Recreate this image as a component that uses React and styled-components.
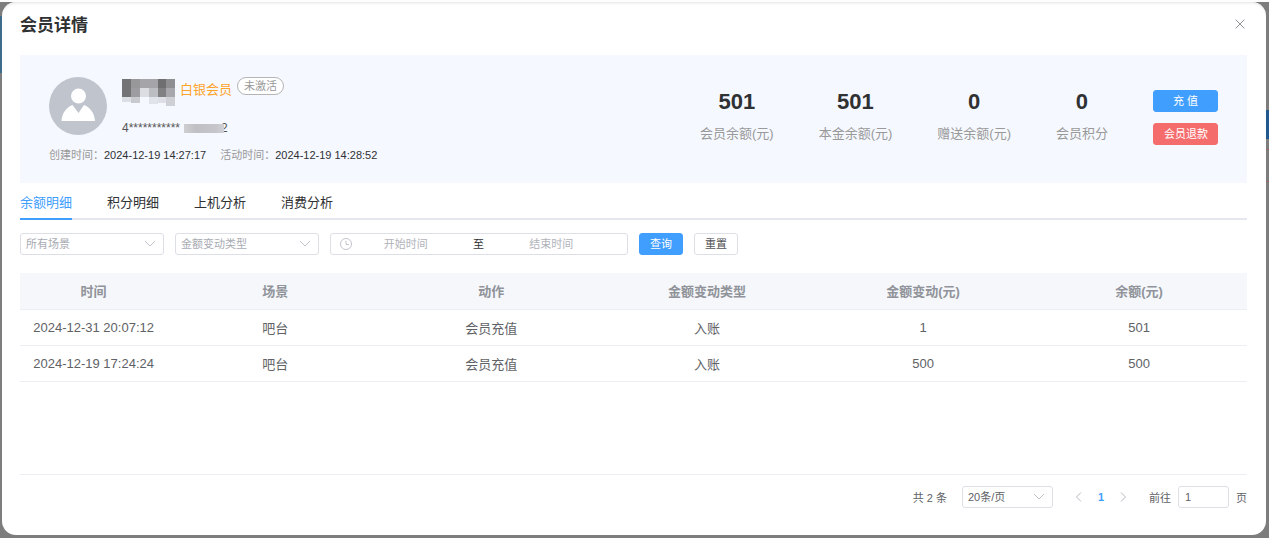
import React, { useState } from 'react'
import styled, { createGlobalStyle } from 'styled-components'

const GlobalStyle = createGlobalStyle`
  * {
    box-sizing: border-box;
  }

  body {
    margin: 0;
    font-family: "Liberation Sans", "Noto Sans CJK SC", sans-serif;
    font-size: 13px;
    color: #303133;
  }

  button,
  input,
  select {
    margin: 0;
    font-family: inherit;
  }
`

const stats = [
  { label: '会员余额(元)', value: 501 },
  { label: '本金余额(元)', value: 501 },
  { label: '赠送余额(元)', value: 0 },
  { label: '会员积分', value: 0 },
]

const tabs = ['余额明细', '积分明细', '上机分析', '消费分析']

const columns = ['时间', '场景', '动作', '金额变动类型', '金额变动(元)', '余额(元)']

const records = [
  ['2024-12-31 20:07:12', '吧台', '会员充值', '入账', '1', '501'],
  ['2024-12-19 17:24:24', '吧台', '会员充值', '入账', '500', '500'],
]

// x, y, shade and height of each blurred block over the member name
const nameBlocks = [
  [0, 0, '#737376'], [9, 0, '#98989b'], [18, 0, '#a5a5a9'], [27, 0, '#a5a5a9'], [36, 0, '#6f6f72'], [44, 0, '#8f8f92'],
  [0, 9, '#737376'], [9, 9, '#9d9da1'], [18, 9, '#dcdde2'], [27, 9, '#bcbdc2'], [36, 9, '#808083'], [44, 9, '#a8a8ac'],
  [0, 18, '#dcdee5', 5], [9, 18, '#c9cad0', 6], [27, 18, '#e1e3ea', 7], [36, 18, '#dddfe6', 6], [44, 18, '#cfd0d6'],
]

const Chevron = ({ d = 'M1 3l5 5 5-5' }) => (
  <svg width="12" height="12" viewBox="0 0 12 12" fill="none" stroke="currentColor" aria-hidden="true">
    <path d={d} />
  </svg>
)

const Avatar = () => (
  <svg width="58" height="58" viewBox="0 0 58 58" aria-hidden="true">
    <circle cx="29" cy="29" r="29" fill="#c0c4cc" />
    <circle cx="29.500" cy="19" r="7.500" fill="#fff" />
    <path d="M12.500 44c.3-7.500 4.500-13.500 11-16l6 8 5.500-8c6.500 2.500 10.700 8.500 11 16z" fill="#fff" />
  </svg>
)

const NameMask = () => (
  <svg width="53" height="27" viewBox="0 0 53 27" aria-hidden="true" shapeRendering="crispEdges">
    {nameBlocks.map(([x, y, fill, height = 9]) => (
      <rect key={`${x}-${y}`} x={x} y={y} width="9" height={height} fill={fill} />
    ))}
  </svg>
)

const Clock = () => (
  <svg width="12" height="12" viewBox="0 0 12 12" fill="none" stroke="currentColor" aria-hidden="true">
    <circle cx="6" cy="6" r="5.500" />
    <path d="M6 2.800V6.500h3" />
  </svg>
)

const App = () => {
  const [active, setActive] = useState(0)

  return (
    <Overlay>
      <GlobalStyle />
      <Dialog role="dialog" aria-labelledby="dialog-title">
        <Header>
          <Title id="dialog-title">会员详情</Title>
          <CloseButton type="button" aria-label="关闭">
            <svg width="10" height="10" viewBox="0 0 10 10" fill="none" stroke="currentColor">
              <path d="M.5.5l9 9M9.500.5l-9 9" />
            </svg>
          </CloseButton>
        </Header>

        <MemberCard>
          <Member>
            <Profile>
              <Avatar />
              <div>
                <NameRow>
                  <NameMask />
                  <Level>白银会员</Level>
                  <Status>未激活</Status>
                </NameRow>
                <IdRow>
                  4***********<IdMask />2
                </IdRow>
              </div>
            </Profile>
            <Times>
              <span>创建时间：<b>2024-12-19 14:27:17</b></span>
              <span>活动时间：<b>2024-12-19 14:28:52</b></span>
            </Times>
          </Member>
          <Summary>
            {stats.map((s) => (
              <Stat key={s.label}>
                <dd>{s.value}</dd>
                <dt>{s.label}</dt>
              </Stat>
            ))}
            <Actions>
              <Button type="button" $color="#409eff">充 值</Button>
              <Button type="button" $color="#f56c6c">会员退款</Button>
            </Actions>
          </Summary>
        </MemberCard>

        <Tabs role="tablist">
          {tabs.map((tab, i) => (
            <Tab key={tab} type="button" role="tab" aria-selected={active === i} $active={active === i} onClick={() => setActive(i)}>
              {tab}
            </Tab>
          ))}
        </Tabs>

        <Filters>
          <SelectBox $width="144px">
            <Select aria-label="所有场景"><option>所有场景</option></Select>
            <Chevron />
          </SelectBox>
          <SelectBox $width="144px">
            <Select aria-label="金额变动类型"><option>金额变动类型</option></Select>
            <Chevron />
          </SelectBox>
          <DateRange>
            <Clock />
            <DateInput placeholder="开始时间" aria-label="开始时间" />
            <Separator>至</Separator>
            <DateInput placeholder="结束时间" aria-label="结束时间" />
          </DateRange>
          <Button type="button" $color="#409eff">查询</Button>
          <Button type="button">重置</Button>
        </Filters>

        <TableArea>
          <Table>
            <thead>
              <tr>{columns.map((c) => <th key={c} scope="col">{c}</th>)}</tr>
            </thead>
            <tbody>
              {records.map((row) => (
                <tr key={row[0]}>
                  {row.map((cell, i) => <td key={columns[i]}>{cell}</td>)}
                </tr>
              ))}
            </tbody>
          </Table>
        </TableArea>

        <Pagination>
          <Total>共 2 条</Total>
          <SelectBox $width="91px" $dark>
            <Select aria-label="每页条数"><option>20条/页</option></Select>
            <Chevron />
          </SelectBox>
          <Pager>
            <PageButton type="button" aria-label="上一页" disabled><Chevron d="M8 1.500L3.500 6 8 10.500" /></PageButton>
            <PageButton type="button" $current>1</PageButton>
            <PageButton type="button" aria-label="下一页" disabled><Chevron d="M4 1.500L8.500 6 4 10.500" /></PageButton>
          </Pager>
          <Jumper>
            前往
            <JumpInput defaultValue="1" />
            页
          </Jumper>
        </Pagination>
      </Dialog>
    </Overlay>
  )
}

export default App

const Overlay = styled.div`
  display: flex;
  min-height: 100vh;
  padding: 0 3px 3px 2px;
  border-top: 2px solid #fdfdfd;
  background:
    linear-gradient(#3f6c8d, #3f6c8d) 0 14px / 2px 57px no-repeat,
    linear-gradient(#205890, #205890) right 108px / 3px 29px no-repeat,
    linear-gradient(#9a6262, #9a6262) right 147px / 3px 1px no-repeat,
    linear-gradient(#9a6262, #9a6262) right 179px / 3px 1px no-repeat,
    #7d7d7d;
`

const Dialog = styled.main`
  display: flex;
  flex-direction: column;
  flex: 1;
  min-width: 0;
  padding: 0 19px 0 18px;
  border-radius: 14px;
  background: #fff;
  box-shadow: inset 0 3px 3px -2px #e4e4e4;
`

const Header = styled.header`
  display: flex;
  justify-content: space-between;
  align-items: center;
  height: 53px;
  padding-bottom: 9px;
`

const Title = styled.h1`
  margin: 0;
  padding-top: 3px;
  font-size: 17px;
  line-height: 24px;
`

const CloseButton = styled.button`
  display: flex;
  padding: 2px;
  border: 0;
  background: none;
  color: #909399;
`

const MemberCard = styled.section`
  display: flex;
  justify-content: space-between;
  align-items: flex-start;
  min-height: 128px;
  padding: 22px 29px 16px;
  background: #f5f8ff;
`

const Member = styled.div`
  display: flex;
  flex-direction: column;
  gap: 9px;
`

const Profile = styled.div`
  display: flex;
  gap: 15px;
`

const NameRow = styled.div`
  display: flex;
  align-items: flex-start;
  height: 42px;

  svg {
    margin-top: 2px;
  }
`

const Level = styled.span`
  margin: 3px 5px 0;
  line-height: 20px;
  color: #fea32b;
`

const Status = styled.span`
  padding: 0 6px;
  border: 1px solid #b4b4b4;
  border-radius: 9px;
  background: #fff;
  font-size: 11px;
  line-height: 16px;
  color: #999;
`

const IdRow = styled.div`
  display: flex;
  align-items: center;
  font-size: 12px;
  line-height: 18px;
  color: #555;
`

const IdMask = styled.span`
  z-index: 1;
  width: 40px;
  height: 9px;
  margin: 0 -3px 0 4px;
  background: linear-gradient(90deg, #cfcfd2, #c0c0c4 30%, #c6c6ca 80%, #cfd0d6);
`

const Times = styled.div`
  display: flex;
  gap: 14px;
  font-size: 11px;
  line-height: 18px;
  color: #999;

  b {
    font-weight: 400;
    color: #303133;
  }
`

const Summary = styled.dl`
  display: flex;
  align-items: flex-start;
  gap: 45px;
  margin: 10px 0 0;
`

const Stat = styled.div`
  text-align: center;

  dd {
    margin: 0;
    font-size: 22px;
    font-weight: 700;
    line-height: 30px;
  }

  dt {
    line-height: 33px;
    color: #999;
  }
`

const Actions = styled.div`
  display: flex;
  flex-direction: column;
  gap: 11px;
  width: 65px;
  padding-top: 3px;
`

const Button = styled.button`
  height: 22px;
  padding: 0 10px;
  border: 1px solid ${({ $color }) => $color || '#dcdfe6'};
  border-radius: 3px;
  background: ${({ $color }) => $color || '#fff'};
  color: ${({ $color }) => ($color ? '#fff' : '#505256')};
  font-size: 11px;
  line-height: 20px;
  white-space: nowrap;
`

const Tabs = styled.div`
  display: flex;
  gap: 35px;
  height: 37px;
  box-shadow: inset 0 -2px #e4e7ed;
`

const Tab = styled.button`
  padding: 1px 0 0;
  border: 0;
  border-bottom: 2px solid ${({ $active }) => ($active ? '#409eff' : 'transparent')};
  background: none;
  color: ${({ $active }) => ($active ? '#409eff' : '#303133')};
  font-size: 13px;
`

const Filters = styled.div`
  display: flex;
  gap: 11px;
  margin: 13px 0 18px;
`

const SelectBox = styled.div`
  display: flex;
  align-items: center;
  width: ${({ $width }) => $width};
  height: 22px;
  padding-right: 7px;
  border: 1px solid #dcdfe6;
  border-radius: 3px;
  color: ${({ $dark }) => ($dark ? '#606266' : '#a8abb2')};

  svg {
    flex: none;
    color: #c0c4cc;
  }
`

const Select = styled.select`
  flex: 1;
  min-width: 0;
  height: 20px;
  padding: 0 0 0 5px;
  border: 0;
  appearance: none;
  background: none;
  color: inherit;
  font-size: 11px;
`

const DateRange = styled.div`
  display: flex;
  align-items: center;
  width: 298px;
  height: 22px;
  padding: 0 22px 0 9px;
  border: 1px solid #dcdfe6;
  border-radius: 3px;
  color: #c0c4cc;
`

const DateInput = styled.input`
  flex: 1;
  min-width: 0;
  height: 20px;
  padding: 0;
  border: 0;
  background: none;
  font-size: 11px;
  text-align: center;

  &::placeholder {
    color: #b0b3ba;
  }
`

const Separator = styled.span`
  width: 38px;
  font-size: 11px;
  line-height: 18px;
  text-align: center;
  color: #303133;
`

const TableArea = styled.div`
  flex: 1;
  border-bottom: 1px solid #ebeef5;
`

const Table = styled.table`
  width: 100%;
  border-collapse: separate;
  border-spacing: 0;
  table-layout: fixed;
  text-align: center;
  color: #606266;

  th,
  td {
    height: 36px;
    padding: 0;
    border-bottom: 1px solid #ebeef5;
  }

  th {
    height: 37px;
    padding-bottom: 2px;
    background: #f5f7fb;
    color: #909399;
  }

  th:first-child {
    width: 12%;
  }
`

const Pagination = styled.nav`
  display: flex;
  justify-content: flex-end;
  align-items: center;
  gap: 15px;
  padding: 11px 0 27px;
  font-size: 11px;
  color: #606266;
`

const Total = styled.span`
  white-space: nowrap;
`

const Pager = styled.div`
  display: flex;
`

const PageButton = styled.button`
  display: flex;
  justify-content: center;
  align-items: center;
  width: 22px;
  height: 22px;
  padding: 0;
  border: 0;
  background: none;
  color: ${({ $current }) => ($current ? '#409eff' : '#b4b8bf')};
  font-size: 11px;
  font-weight: 700;
`

const Jumper = styled.label`
  display: flex;
  align-items: center;
  gap: 7px;
`

const JumpInput = styled.input`
  width: 51px;
  height: 22px;
  padding: 0 6px;
  border: 1px solid #dcdfe6;
  border-radius: 3px;
  color: #606266;
  font-size: 11px;
`
